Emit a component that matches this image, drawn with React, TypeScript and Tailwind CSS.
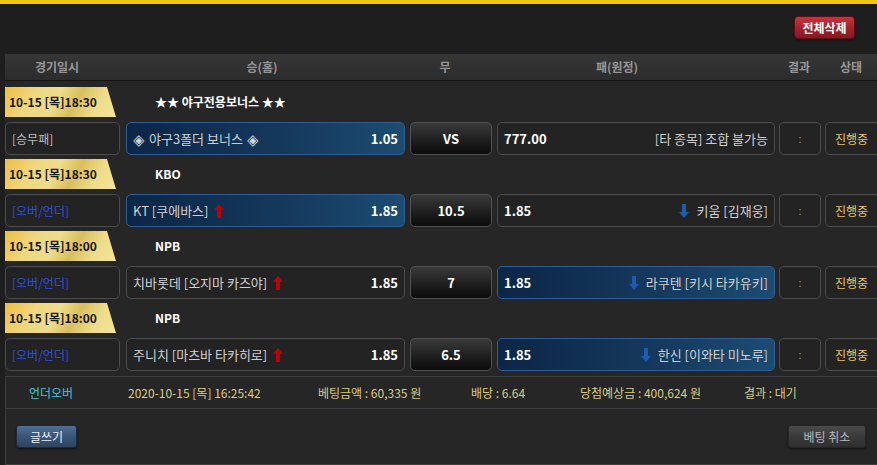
import React from 'react';

type Row = {
  date: string;
  title: string;
  kind: string;
  kindBlue: boolean;
  home: React.ReactNode;
  homeOdds: string;
  homeArrow?: 'up';
  mid: string;
  away: string;
  awayOdds: string;
  awayArrow?: 'down';
  pick: 'home' | 'away';
};

const Diamond = () => <span className="text-[15px] leading-none text-[#d0d0d0]">◈</span>;

const ROWS: Row[] = [
  {
    date: '10-15 [목]18:30',
    title: '★★ 야구전용보너스 ★★',
    kind: '[승무패]',
    kindBlue: false,
    home: (
      <>
        <Diamond />
        <span className="mx-[4px]">야구3폴더 보너스</span>
        <Diamond />
      </>
    ),
    homeOdds: '1.05',
    mid: 'VS',
    away: '[타 종목] 조합 불가능',
    awayOdds: '777.00',
    pick: 'home',
  },
  { date: '10-15 [목]18:30', title: 'KBO', kind: '[오버/언더]', kindBlue: true, home: 'KT [쿠에바스]', homeOdds: '1.85', homeArrow: 'up', mid: '10.5', away: '키움 [김재웅]', awayOdds: '1.85', awayArrow: 'down', pick: 'home' },
  { date: '10-15 [목]18:00', title: 'NPB', kind: '[오버/언더]', kindBlue: true, home: '치바롯데 [오지마 카즈야]', homeOdds: '1.85', homeArrow: 'up', mid: '7', away: '라쿠텐 [키시 타카유키]', awayOdds: '1.85', awayArrow: 'down', pick: 'away' },
  { date: '10-15 [목]18:00', title: 'NPB', kind: '[오버/언더]', kindBlue: true, home: '주니치 [마츠바 타카히로]', homeOdds: '1.85', homeArrow: 'up', mid: '6.5', away: '한신 [이와타 미노루]', awayOdds: '1.85', awayArrow: 'down', pick: 'away' },
];

const darkBox = 'rounded-[5px] border border-[#4c4c4c] bg-[#232323]';
const blueBox = 'rounded-[5px] border border-[#2d5d98] bg-[linear-gradient(90deg,#0c2646_0%,#153a5e_60%,#1c4c72_100%)]';

function UpArrow() {
  return (
    <svg width="10" height="14" viewBox="0 0 10 14" className="ml-[6px] shrink-0">
      <path d="M5 0 L10 6 L7 6 L7 14 L3 14 L3 6 L0 6 Z" fill="#c00000" />
    </svg>
  );
}

function DownArrow() {
  return (
    <svg width="10" height="14" viewBox="0 0 10 14" className="mr-[7px] shrink-0">
      <path d="M3 0 L7 0 L7 8 L10 8 L5 14 L0 8 L3 8 Z" fill="#1d5bb3" />
    </svg>
  );
}

function BetRow({ row }: { row: Row }) {
  return (
    <div className="flex h-[33px] items-stretch">
      <div className={`${darkBox} flex w-[115px] shrink-0 items-center pl-[6px] text-[12px] ${row.kindBlue ? 'text-[#2f4fe0]' : 'text-[#bdbdbd]'}`}>
        {row.kind}
      </div>
      <div className={`${row.pick === 'home' ? blueBox : darkBox} ml-[6px] flex w-[279px] shrink-0 items-center justify-between px-[6px]`}>
        <span className="flex items-center text-[13px] text-[#cfcfcf]">
          {row.home}
          {row.homeArrow && <UpArrow />}
        </span>
        <span className="text-[13px] font-bold text-white">{row.homeOdds}</span>
      </div>
      <div className="ml-[5px] flex w-[82px] shrink-0 items-center justify-center rounded-[5px] border border-[#505050] bg-[linear-gradient(180deg,#3a3a3a_0%,#1c1c1c_60%,#0c0c0c_100%)] text-[13px] font-bold text-white">
        {row.mid}
      </div>
      <div className={`${row.pick === 'away' ? blueBox : darkBox} ml-[5px] flex w-[278px] shrink-0 items-center justify-between px-[6px]`}>
        <span className="text-[13px] font-bold text-white">{row.awayOdds}</span>
        <span className="flex items-center text-[13px] text-[#cfcfcf]">
          {row.awayArrow && <DownArrow />}
          {row.away}
        </span>
      </div>
      <div className={`${darkBox} ml-[4px] flex w-[42px] shrink-0 items-center justify-center text-[11px] text-[#8a8a8a]`}>:</div>
      <div className={`${darkBox} ml-[4px] flex w-[60px] shrink-0 items-center pl-[9px] text-[12px] text-[#e6c766]`}>진행중</div>
    </div>
  );
}

function DateRow({ row }: { row: Row }) {
  return (
    <div className="flex h-[30px] items-center">
      <div className="flex h-full w-[111px] shrink-0 items-center pl-[4px] text-[12px] font-bold text-[#161616] [clip-path:polygon(0_0,102px_0,100%_100%,0_100%)] bg-[linear-gradient(120deg,#f0bd3e_0%,#efd77e_25%,#eedc8a_45%,#d9bf5c_62%,#efdc8a_80%,#f3e49a_100%)]">
        {row.date}
      </div>
      <div className="ml-[39px] text-[12px] font-bold text-white">{row.title}</div>
    </div>
  );
}

export default function App() {
  return (
    <div className="h-[465px] w-[877px] overflow-hidden bg-[#1e1e1e] font-['Noto_Sans_CJK_KR','Noto_Sans',sans-serif]">
      <div className="h-[4px] w-full bg-[#f5c316]" />
      <div className="w-[900px] pl-[5px]">
        {/* top toolbar */}
        <div className="flex h-[50px] items-start pt-[12px] pl-[789px]">
          <button className="flex h-[23px] w-[61px] items-center justify-center rounded-[4px] border border-[#5a1016] bg-[linear-gradient(180deg,#c9343e_0%,#a5222c_50%,#861820_100%)] text-[12px] font-bold text-white shadow-[0_1px_2px_rgba(0,0,0,0.6)]">
            전체삭제
          </button>
        </div>

        {/* header */}
        <div className="flex h-[27px] items-center border-b border-[#141414] bg-[linear-gradient(180deg,#363636_0%,#2c2c2c_100%)] text-[12px] font-bold text-[#979797]">
          <div className="w-[104px] text-center">경기일시</div>
          <div className="w-[306px] text-center">승(홈)</div>
          <div className="w-[60px] text-center">무</div>
          <div className="w-[284px] text-center">패(원정)</div>
          <div className="w-[80px] text-center">결과</div>
          <div className="w-[24px] text-center whitespace-nowrap">상태</div>
        </div>

        {/* rows */}
        <div className="bg-[#262626] pt-[6px]">
          {ROWS.map((row, i) => (
            <div key={i} className="pb-[4px]">
              <DateRow row={row} />
              <div className="mt-[5px]">
                <BetRow row={row} />
              </div>
            </div>
          ))}

          {/* summary */}
          <div className="mt-[1px] border-t border-l border-[#3d3d3d]">
            <div className="flex h-[32px] items-center border-b border-[#3d3d3d] text-[12px] text-[#d8cc84]">
              <div className="w-[122px] shrink-0 pl-[23px] text-[#3fc6d6]">언더오버</div>
              <div className="w-[190px] shrink-0">2020-10-15 [목] 16:25:42</div>
              <div className="w-[153px] shrink-0">베팅금액 : 60,335 원</div>
              <div className="w-[109px] shrink-0">배당 : 6.64</div>
              <div className="w-[164px] shrink-0">당첨예상금 : 400,624 원</div>
              <div>결과 : 대기</div>
            </div>
            <div className="flex h-[56px] items-center justify-between border-b border-[#3d3d3d] pl-[10px] pr-[34px]">
              <button className="flex h-[23px] w-[61px] items-center justify-center rounded-[3px] border border-[#1b2a3c] bg-[linear-gradient(180deg,#4f6f92_0%,#3a5576_50%,#2c4462_100%)] text-[12px] text-[#e8eef5] shadow-[0_1px_2px_rgba(0,0,0,0.6)]">
                글쓰기
              </button>
              <button className="flex h-[23px] w-[78px] items-center justify-center rounded-[3px] border border-[#262626] bg-[linear-gradient(180deg,#4a4a4a_0%,#3a3a3a_50%,#2f2f2f_100%)] text-[12px] text-[#b8b8b8] shadow-[0_1px_2px_rgba(0,0,0,0.6)]">
                베팅 취소
              </button>
            </div>
          </div>
        </div>
      </div>
    </div>
  );
}
